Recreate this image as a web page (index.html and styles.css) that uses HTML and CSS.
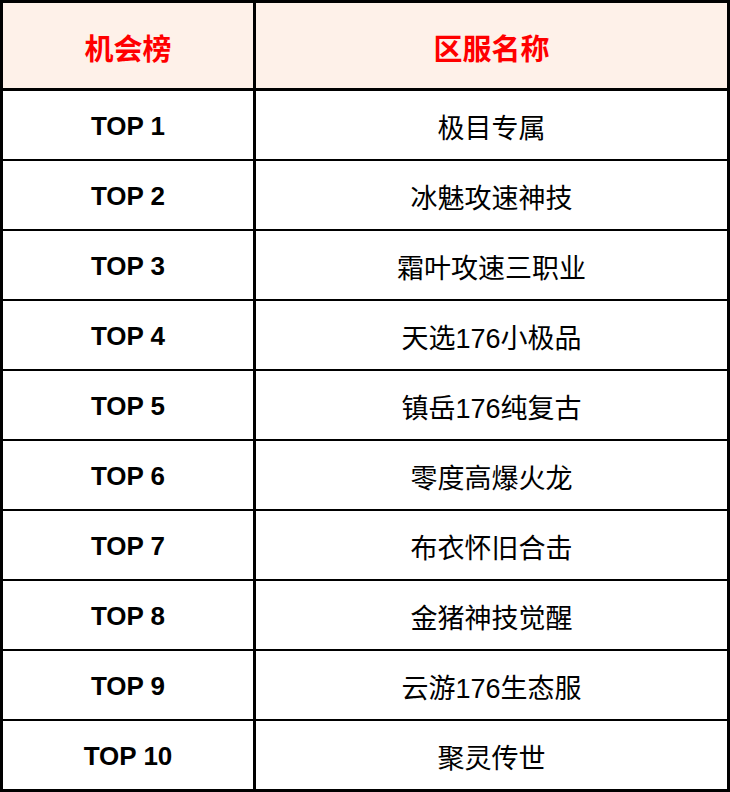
FILE: index.html
```html
<!DOCTYPE html>
<html lang="zh-CN">
<head>
<meta charset="utf-8">
<title>机会榜</title>
<link rel="stylesheet" href="styles.css">
</head>
<body>
<div class="table">
  <div class="row head">
    <div class="cell rank">机会榜</div>
    <div class="cell name">区服名称</div>
  </div>
  <div class="row"><div class="cell rank">TOP 1</div><div class="cell name">极目专属</div></div>
  <div class="row"><div class="cell rank">TOP 2</div><div class="cell name">冰魅攻速神技</div></div>
  <div class="row"><div class="cell rank">TOP 3</div><div class="cell name">霜叶攻速三职业</div></div>
  <div class="row"><div class="cell rank">TOP 4</div><div class="cell name">天选176小极品</div></div>
  <div class="row"><div class="cell rank">TOP 5</div><div class="cell name">镇岳176纯复古</div></div>
  <div class="row"><div class="cell rank">TOP 6</div><div class="cell name">零度高爆火龙</div></div>
  <div class="row"><div class="cell rank">TOP 7</div><div class="cell name">布衣怀旧合击</div></div>
  <div class="row"><div class="cell rank">TOP 8</div><div class="cell name">金猪神技觉醒</div></div>
  <div class="row"><div class="cell rank">TOP 9</div><div class="cell name">云游176生态服</div></div>
  <div class="row"><div class="cell rank">TOP 10</div><div class="cell name">聚灵传世</div></div>
</div>
</body>
</html>
```
FILE: styles.css
```css
html, body {
  margin: 0;
  padding: 0;
  background: #ffffff;
}
.table {
  width: 730px;
  height: 792px;
  box-sizing: border-box;
  border: 3px solid #000;
  font-family: "Liberation Sans", "Noto Sans CJK SC", sans-serif;
  color: #000;
}
.row {
  display: grid;
  grid-template-columns: 253px 1fr;
  height: 70px;
  box-sizing: border-box;
  border-bottom: 2px solid #000;
}
.row:last-child {
  border-bottom: none;
  height: 68px;
}
.row.head {
  height: 88px;
  border-bottom: 3px solid #000;
  background: #fef1e9;
}
.cell {
  display: flex;
  align-items: center;
  justify-content: center;
  padding-top: 2px;
}
.rank {
  border-right: 3px solid #000;
  font-weight: bold;
  font-size: 26px;
}
.name {
  font-size: 27px;
}
.head .cell {
  color: #ff0000;
  font-weight: bold;
  font-size: 29px;
}
```
